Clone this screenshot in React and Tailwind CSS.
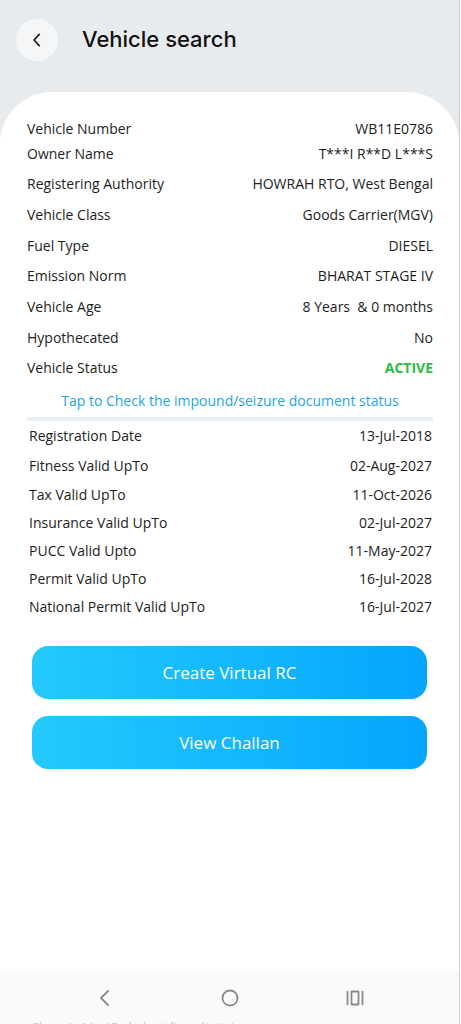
import React from 'react';

const basicRows = [
  ['Vehicle Number', 'WB11E0786'],
  ['Owner Name', 'T***I R**D L***S'],
  ['Registering Authority', 'HOWRAH RTO, West Bengal'],
  ['Vehicle Class', 'Goods Carrier(MGV)'],
  ['Fuel Type', 'DIESEL'],
  ['Emission Norm', 'BHARAT STAGE IV'],
  ['Vehicle Age', '8 Years  & 0 months'],
  ['Hypothecated', 'No'],
];

const dateRows = [
  ['Registration Date', '13-Jul-2018'],
  ['Fitness Valid UpTo', '02-Aug-2027'],
  ['Tax Valid UpTo', '11-Oct-2026'],
  ['Insurance Valid UpTo', '02-Jul-2027'],
  ['PUCC Valid Upto', '11-May-2027'],
  ['Permit Valid UpTo', '16-Jul-2028'],
  ['National Permit Valid UpTo', '16-Jul-2027'],
];

function Row({ label, value, valueClass = 'text-[#1d1d1d]', className = '' }) {
  return (
    <div className={`flex items-center justify-between ${className}`}>
      <span>{label}</span>
      <span className={`whitespace-pre ${valueClass}`}>{value}</span>
    </div>
  );
}

export default function App() {
  return (
    <div className="h-[1024px] w-full overflow-hidden bg-white" style={{ fontFamily: '"Open Sans", sans-serif' }}>
      <div className="relative flex h-full w-[460px] flex-col border-r border-[#cfcfcf] bg-[#e8ebee]">
        <header className="flex h-[92px] items-start gap-[24px] pl-[16px] pt-[19px]">
          <button className="flex h-[42px] w-[42px] items-center justify-center rounded-full bg-[#f4f6f8]">
            <svg width="18" height="18" viewBox="0 0 24 24" fill="none" stroke="#222" strokeWidth="2.4" strokeLinecap="round" strokeLinejoin="round">
              <path d="M15 4.5l-7 7.5 7 7.5" />
            </svg>
          </button>
          <h1 className="pt-[4px] text-[22px] font-medium text-[#111]" style={{ fontFamily: 'Inter, sans-serif' }}>
            Vehicle search
          </h1>
        </header>

        <main className="flex-1 rounded-t-[52px] bg-white text-[14px] text-[#1d1d1d]">
          <div className="pl-[27px] pr-[26px] pt-[25px]">
            <div className="flex flex-col">
              {basicRows.map(([l, v], i) => (
                <Row key={l} label={l} value={v} className={i === 0 ? 'h-[22px]' : i === 1 ? 'mt-[3px] h-[22px]' : 'mt-[8.7px] h-[22px]'} />
              ))}
              <Row label="Vehicle Status" value="ACTIVE" valueClass="font-bold text-[#2dbb45]" className="mt-[8.7px] h-[22px]" />
            </div>
            <p className="mt-[11px] text-center text-[14px] text-[#1da5e2]">Tap to Check the impound/seizure document status</p>
            <div className="mt-[6px] h-[4px] bg-[#e9f0f4]" />
            <div className="flex flex-col pl-[2px] pr-[1px] pt-[4px]">
              {dateRows.map(([l, v], i) => (
                <Row key={l} label={l} value={v} className={i === 0 ? 'h-[22px]' : i === 1 ? 'mt-[8px] h-[22px]' : 'mt-[6.2px] h-[22px]'} />
              ))}
            </div>
          </div>

          <div className="mt-[28px] flex flex-col gap-[17px] px-[32px]">
            <button className="h-[53px] rounded-[16px] bg-gradient-to-r from-[#24c9fd] to-[#05a5fd] text-[17px] font-medium text-white">
              Create Virtual RC
            </button>
            <button className="h-[53px] rounded-[16px] bg-gradient-to-r from-[#24c9fd] to-[#05a5fd] text-[17px] font-medium text-white">
              View Challan
            </button>
          </div>
        </main>

        <nav className="absolute bottom-0 left-0 right-0 h-[52px] bg-[#fafafa]">
          <div className="relative h-full">
            <svg className="absolute left-[97px] top-[17px]" width="16" height="18" viewBox="0 0 16 18" fill="none" stroke="#8a8a8a" strokeWidth="1.8" strokeLinecap="round" strokeLinejoin="round">
              <path d="M11 2L4 9l7 7" />
            </svg>
            <svg className="absolute left-[221px] top-[17px]" width="18" height="18" viewBox="0 0 18 18" fill="none" stroke="#8a8a8a" strokeWidth="1.8">
              <circle cx="9" cy="9" r="7.5" />
            </svg>
            <svg className="absolute left-[346px] top-[18px]" width="18" height="16" viewBox="0 0 18 16" fill="none" stroke="#8a8a8a" strokeWidth="1.8">
              <path d="M1.5 1v14" />
              <rect x="5.5" y="1.5" width="7" height="13" rx="0.5" />
              <path d="M16.5 1v14" />
            </svg>
            <span className="absolute left-[30px] top-[45px] text-[14px] text-[#c8c8c8]">Chassis No (Only last five digits)</span>
          </div>
        </nav>
      </div>
    </div>
  );
}
